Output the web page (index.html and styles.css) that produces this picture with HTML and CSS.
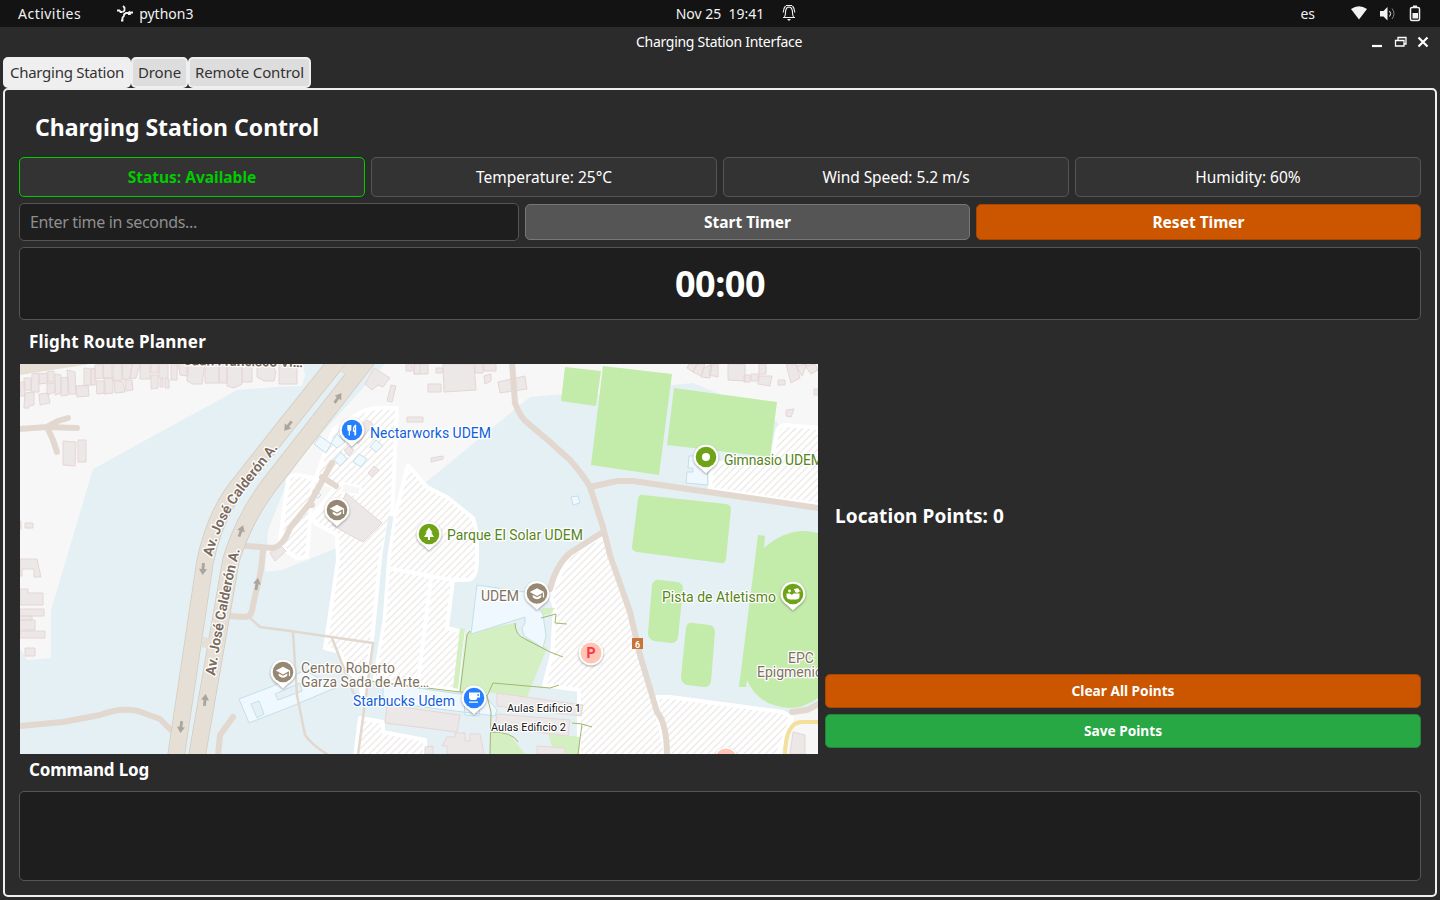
FILE: index.html
```html
<!DOCTYPE html>
<html lang="en">
<head>
<meta charset="utf-8">
<title>Charging Station Interface</title>
<link rel="stylesheet" href="styles.css">
</head>
<body>
<div class="topbar">
  <div class="top-left"><span class="t-act">Activities</span>
    <span class="app"><svg class="ic-app" width="18" height="18" viewBox="0 0 18 18"><path d="M1 6.500h2.500l1 1.500h2M7 8l1.500-1.500V3.500L7 2M5 16.500h1.500v-3L8 12V10.500l2-1.500h2.500l1.500-1.500M12 10h2l1-1.500h2"/></svg><span class="t-py">python3</span></span>
  </div>
  <div class="top-mid"><span class="t-date">Nov 25&nbsp; 19:41</span>
    <svg class="ic-bell" width="16" height="18" viewBox="0 0 16 18"><path d="M3.500 13C5 11 4.200 8 4.800 6 5.300 4 6.500 3 8 3s2.700 1 3.200 3c.6 2-.2 5 1.300 7M2 13.500h12M4.500 2Q2.500 4 2.200 8.500M11.500 2q2 2 2.300 6.500M5 1.500h6"/><path class="solid" d="M6 15h4l-2 2z"/></svg>
  </div>
  <div class="top-right"><span class="t-es">es</span>
    <svg width="76" height="18" viewBox="0 0 76 18"><path class="w" d="M1 4Q9-1.500 17 4L9 14.500z"/><path class="w" d="M30 6h3.500L37.500 2v13.500l-4-4H30z"/><path class="l" d="M39.500 6q2.500 2.500 0 5.500"/><path class="l dim" d="M42 3.500q4 5 0 10.500"/><rect class="l thicker" x="60.500" y="2.500" width="9" height="13" rx="1.500"/><path class="w" d="M63 .5h4v2h-4zM62.500 8h5.500v5.500h-5.500z"/></svg>
  </div>
</div>
<div class="titlebar"><span class="t-win">Charging Station Interface</span>
  <svg class="winbtns" width="60" height="16" viewBox="0 0 60 16"><path class="thick" d="M3 11h10"/><path class="l" d="M26.500 5.500h8.500v5.500h-8.500zM29 5.500v-3h8v6.500h-2"/><path class="thick" d="M49.500 2.500l9 9M58.500 2.500l-9 9"/></svg>
</div>
<div class="tabs"><div class="tab on"><span class="t-tab1">Charging Station</span></div><div class="tab tab-d"><span class="t-tab2">Drone</span></div><div class="tab tab-r"><span class="t-tab3">Remote Control</span></div></div>
<main class="panel">
  <h1>Charging Station Control</h1>
  <div class="stats">
    <div class="stat ok">Status: Available</div>
    <div class="stat">Temperature: 25°C</div>
    <div class="stat"><span class="t-s3">Wind Speed: 5.2 m/s</span></div>
    <div class="stat">Humidity: 60%</div>
  </div>
  <div class="controls">
    <div class="field"><span class="t-ph">Enter time in seconds...</span></div>
    <div class="btn grey">Start Timer</div>
    <div class="btn orange">Reset Timer</div>
  </div>
  <div class="clock"><span class="t-clock">00:00</span></div>
  <h2 class="h-route">Flight Route Planner</h2>
  <div class="route">
    <svg class="map" width="800" height="392" viewBox="19 363 800 392">
      <defs>
        <pattern id="hatch" width="7.200" height="7.200" patternUnits="userSpaceOnUse"><rect width="7.200" height="7.200" fill="#fff"/><path d="M-1 8.200L8.200-1M-1 1L1-1M6.200 8.200l2-2" stroke="#e8e3e0" stroke-width="1.100"/></pattern>
        <g id="pin"><path class="pinbg" d="M0-12.500a12.500 12.500 0 0 1 8.500 21.500Q4.500 12 0 16.500-4.500 12-8.500 9A12.500 12.500 0 0 1 0-12.500z"/></g>
        <g id="cap"><path d="M0-5.200L7.200-1.400 0 2.400-7.200-1.400z" fill="#fff"/><path d="M-4.300 1.500v2.300Q0 7.600 4.300 3.800V1.500L0 3.800zM5.900-1h1.200v5H5.900z" fill="#fff"/></g>
        <g id="arrow"><path d="M-1.400 6v-6h-2.600L0-6l4 6H1.400v6z" fill="#aaa59d"/></g>
      </defs>
      <rect x="20" y="364" width="798" height="390" fill="#e4f0f4"/>
      <g fill="#f7f7f7">
        <path d="M20 364H303l2 11-3 11-25 1-40 3L93 469 66 560 51 610v48l-24 2-7-12z"/>
        <path d="M385 364H818v66l-38-2-3-6-60-29-24-10-21 2-71 10-37-1-34 3-105 86-35 37-53 28-55 22-17 2 3-42 22-55 12-20z"/>
        <path d="M792 712l26-8v50h-41l10-20z"/>
      </g>
      <path d="M20 364h70L20 375z" fill="#e5dfd5"/>
      <g class="hatched">
        <path d="M353 417q12-9 27-9h17l-5 109-12 43-8 82-9 60-3-20-10-10-10-20-15-4 13-88-1-25-22-12q-5-8 6-17l14-19-20-7 18-50z"/>
        <path d="M288 480q3-6 10-5l15 3-3 40-3 39-10 1-12-8-5-10z"/>
        <path d="M408 465l19 22 20 10 26 21 4 14v31q-1 17-10 17h-14l-6 48 16 4-6 58-84-10 11-58 5-67 5-36z"/>
        <path d="M360 718l23 4v10l42 8v16h-70z"/>
        <path d="M603 535l10 25 17 52 10 43 17 57 10 44h-88v-66l-35-5 8-30 3-47-5-13 20-40z"/>
        <path d="M657 697h13l113 15 9 6-15 38H667l-8-34z"/>
        <path d="M777 432q1-7 10-7l33 3v77l-110-16 1-16 6-10 55-3z"/>
      </g>
      <path d="M343 483l18 4-2 8-18-2z" fill="#f7f7f7" stroke="#fff" stroke-width="2"/>
      <path d="M387 568l66 12M431 578l-13 104" stroke="#fff" stroke-width="4" fill="none"/>
      <path d="M391 516l-6 38-5 66-10 60" stroke="#e4f0f4" stroke-width="5" fill="none"/>
      <g class="green">
        <path d="M565 367l36 4-5 35-35-5zM603 366l69 8-13 101-68-10zM674 388l103 14-7 55-103-12z"/>
        <path d="M643 495l83 9q5 1 5 5l-5 50q-1 5-5 4l-84-11q-5-1-5-5l6-48q1-5 5-4z"/>
        <path d="M660 580l17 2q6 1 6 7l-5 48q-1 6-7 6l-17-2q-6-2-6-8l4-48q2-6 8-5zM693 623l16 2q6 1 6 7l-4 49q-1 6-7 6l-17-2q-6-2-6-8l5-49q1-6 7-5z"/>
        <path d="M758 535l7 1-1 12q20-18 43-17l11 2v165q-14 10-28 10-32-2-43-28l-1 7h-7z"/>
      </g>
      <g fill="#d4f0c3"><path d="M467 632l48-9 3 12 29 13-20 49-34-4-33-1zM460 628l5 1-7 60-5-1zM555 608l-5 6-14 3 7-9zM490 732l20 3 15 19h-35zM548 733l32 4-1 17h-25z"/></g>
      <g class="bld">
        <path d="M20 382h5v14h-5zM24 378h7v12h-7zM32 374l7-1v19h-8zM39 374l9-1v10l-9 1zM47 372l7-1v11h-7zM47 384l8-1v9l-8 3zM39 394l9-1 2 10-10 2zM25 393l9-1v13l-5 1v2h-5zM55 374l6 1v18l-6 2zM61 378l7-1v18l-7 1zM67 370l8 2 1 22h-7zM76 386l12-1 1 11-12 1zM84 368l7 1v16l-7 1zM91 369l4-1v17h-4zM95 365l8-1v14l-8 1zM96 381h9v12l-8 1zM104 378h9v15l-9 1zM103 364h9v14h-9zM113 364h9v16l-9 1zM114 380l9 2 2 10-10 1zM122 364h10l-2 14-7 2zM125 380h7l1 10-7 1zM132 364h8l-4 14-6 1zM140 364h10v15h-10zM151 364h7v9h-7zM151 375h7v13l-7 1zM159 364h9v14h-9zM160 379h3v8h-3zM165 379h4v9h-4zM171 364h6v16h-6zM178 364h10v12l-8-1zM187 364h18l-3 20h-9l-6-3zM205 364h14v19h-14zM219 364h8v19h-8zM227 364h15v20l-8 4-7-2zM242 364h10v18h-10zM257 364h15l4 8-2 9h-10l-7-4zM279 364h18v20h-18z"/>
        <path d="M63 441l13 1-1 24-12-1zM78 440h8v22h-8zM20 521h1v8h-1zM25 523h8v5h-8zM20 559h17l4 18h-7v-8h-12v7h-2zM20 589h8v4h15v12H20zM20 609h24v7H20zM20 616h12v4H20zM20 620h15v10H20zM20 631h25v7H20zM25 648h10v8H25z"/>
        <path d="M374 368l16 10-7 9-5-2-6 5-7-6zM391 385l5 1-4 16-5-1zM406 364h6v7h-6zM414 364h14v10h-14zM414 364h6v10h-6zM443 364h31l2 26-32 2zM428 384h13v8h-13zM436 368h7v5h-7zM475 364h8v9h-8zM484 364h12v7h-12zM484 376l7-2v7l-6 3zM498 382l27-6 2 13-27 4zM407 417h16v5h-16zM431 458l12-2v3l-12 3zM353 434l14-14 6 4-15 20zM344 450l5-4 5 4-5 6zM368 473l6-7 5 4-7 7zM346 493l36 30-19 19-15-8-16-9z"/>
        <path d="M689 364h8l-4 8-6-4zM697 364h8l-4 12-8-4zM704 368l8-4-2 14-9-1zM711 364h7v13l-9-2zM728 364h17v17l-17-1zM744 375h6v7h-6zM751 374h8v7h-8zM759 364h7v10h-7zM758 376h14l-2 10-12-2zM778 380h7v5h-7zM786 364h10l4 14-9 5zM796 366l11-2-5 12zM805 366l10-2 3 6-7 4zM786 410l8-1-3 8-5-1zM814 389h4v6h-4zM270 553l10-8 6 6-11 10z"/>
        <path d="M387 705l73 10-3 17-72-9zM447 737h8v-4h10v8h5v-7h10l4 20h-37v-8h-5zM425 747l8-1v8h-8zM497 693l86 12-2 11-84-10zM497 714l73 6-2 16-73-9zM537 746l28 2v6h-28zM793 732l12 3v19h-15z"/>
      </g>
      <g class="glass">
        <path d="M477 585l48 7 18 22 3 22-3 12-19-12-2-8 3-5v-6l-54 17zM239 699l34-13 32-16 30 18-40 17-46 18zM383 683l104 15 10 12-2 6-40-5-72-9zM464 702l16 2-1 12-14-1z"/>
        <path d="M320 436l11 8-5 9-12-9zM337 434l8 8-8 6-6-5zM341 452l6 7-7 7-6-6zM359 454l8 5-6 8-8-5zM376 440l7 6-7 6-6-5zM314 489l7 6-3 3-6-5zM689 456h17l2 29-22-2 1-11h6v-4h-5zM571 497l7-1 2 7-7 2z"/>
      </g>
      <path d="M251 704l8-3 5 13-7 4zM275 694l25-11 2 8-24 9z" fill="#e4f0f4" stroke="#c5dfe8"/>
      <g class="brown">
        <path d="M512 362l3 41q5 15 15 22l20 17 20 18q14 16 20 27l13 40 7 28 20 57 10 43 17 57q10 12 10 44M590 487l27-6h16l185 27M603 532l-33 21q-14 12-20 36"/>
        <path d="M20 429l27-2 30 1M47 427l6 13 4 12M47 427l11-6 10-3M20 726l43-4 37-7q20-8 38-4l22 8 12 12M233 717l-13 18-2 20"/>
        <path d="M247 546l26 2q10-2 17-20l20-25 22-40M322 477l14 9M263 550l-2 20-8 35q-1 12-8 12l-17-1M792 712l15-2 12-6M310 505h2"/>
        <path class="thin" d="M250 618l10 9 30 4 83 12-15 112M293 633l4 62 8 40q8 11 22 19M332 638l21 54 10 12"/>
      </g>
      <path d="M785 757q0-36 18-35h16" fill="none" stroke="#f4df9b" stroke-width="4"/>
      <g fill="none" stroke="#a4b86c"><path d="M470 631l-3 4-7 57 27 4M370 681l90 11M515 623q0 12 10 16l25 13 13 5M541 618l15-4-1 9 12 1M559 685l-9 3-57-5-6 13 4 16-1 42M490 732q23 0 28 10M572 723l10 1 10 3M582 724l-4 30"/></g>
      <g fill="none">
        <path class="edge" d="M343 354L287 424 243 480Q216 510 205 562L176 756"/>
        <path class="edge" d="M373 352L270 484Q244 518 231 560L197 756"/>
        <path class="road" d="M343 354L287 424 243 480Q216 510 205 562L176 756"/>
        <path class="road" d="M373 352L270 484Q244 518 231 560L197 756"/>
        <path d="M208 638l-2 10M352 364l-8 10" stroke="#e5dfd5" stroke-width="10"/>
      </g>
      <use href="#arrow" transform="translate(288 426) rotate(218)"/><use href="#arrow" transform="translate(338 398) rotate(35)"/><use href="#arrow" transform="translate(241 531) rotate(20)"/><use href="#arrow" transform="translate(203 569) rotate(184)"/><use href="#arrow" transform="translate(257 584) rotate(10)"/><use href="#arrow" transform="translate(205 700) rotate(6)"/><use href="#arrow" transform="translate(181 727) rotate(186)"/>
      <path id="p1" d="M212 557Q221 521 245 490L283 442" fill="none"/>
      <path id="p2" d="M215 676Q225 610 241 545" fill="none"/>
      <text class="street"><textPath href="#p1" textLength="129">Av. José Calderón A.</textPath></text>
      <text class="street"><textPath href="#p2" textLength="129">Av. José Calderón A.</textPath></text>
      <text class="street" x="184" y="365" textLength="119" transform="rotate(1 184 365)">Juan Francisco Vi…</text>
      <g class="lbl">
        <text class="blue" x="370" y="438" textLength="121">Nectarworks UDEM</text>
        <text class="gr" x="447" y="540" textLength="136">Parque El Solar UDEM</text>
        <text class="gr" x="724" y="465" textLength="99">Gimnasio UDEM</text>
        <text class="gr" x="662" y="602" textLength="114">Pista de Atletismo</text>
        <text x="481" y="601" textLength="38">UDEM</text>
        <text x="301" y="673" textLength="94">Centro Roberto</text>
        <text x="301" y="687" textLength="128">Garza Sada de Arte…</text>
        <text class="blue" x="353" y="706" textLength="102">Starbucks Udem</text>
        <text x="788" y="663">EPC</text>
        <text x="757" y="677">Epigmenio</text>
        <text class="sm" x="507" y="712" textLength="74">Aulas Edificio 1</text>
        <text class="sm" x="491" y="731" textLength="75">Aulas Edificio 2</text>
      </g>
      <g transform="translate(352 430)"><use href="#pin"/><circle r="10.300" fill="#2580ff"/><path d="M-4-5v4q0 2 1.300 2v4.500M-1.300-5v4q0 2-1.300 2M-2.700-5v5M4-5Q1.500-4 1.500 0v1H3v4.500M3.500-5V5" stroke="#fff" stroke-width="1.300" fill="none"/></g>
      <g transform="translate(337 510)"><use href="#pin"/><circle r="10.300" fill="#968872"/><use href="#cap"/></g>
      <g transform="translate(537 593.500)"><use href="#pin"/><circle r="10.300" fill="#968872"/><use href="#cap"/></g>
      <g transform="translate(283 672)"><use href="#pin"/><circle r="10.300" fill="#968872"/><use href="#cap"/></g>
      <g transform="translate(429 534)"><use href="#pin"/><circle r="10.300" fill="#6fa317"/><path d="M0-6.500l3.500 5H2.200L5 3H1v3h-2V3h-4l2.800-4.500h-1.300z" fill="#fff"/></g>
      <g transform="translate(706 457)"><use href="#pin"/><circle r="10.300" fill="#6fa317"/><circle r="4" fill="#fff"/></g>
      <g transform="translate(793 594)"><use href="#pin"/><circle r="10.300" fill="#6fa317"/><path d="M-6.500-.5h3L-1 1 .5-.5h6V3Q6 5.500 3 5.500h-5.500Q-6 5.500-6.500 2.500z" fill="#fff"/><circle cx="4" cy="-3.500" r="2.300" fill="#fff"/><circle cx="-3.500" cy="-3" r="1.400" fill="#fff"/><path d="M4-3.500h3.500v1H4zM1-5h2v1H1z" fill="#fff"/></g>
      <g transform="translate(474 698)"><use href="#pin"/><circle r="10.300" fill="#2580ff"/><path d="M-5-5.500H6V-.5H3.500Q3 2 1 2h-3.500Q-5 2-5-1zM-5 3.500H4v1.300h-9z" fill="#fff"/><path d="M3.500-4h1.300v2H3.500z" fill="#2580ff"/></g>
      <g transform="translate(591 653)"><circle class="pinbg" r="12.300"/><circle r="10.500" fill="#ffc5b5"/><text class="park" x="0" y="5">P</text></g>
      <g transform="translate(726 759)"><circle class="pinbg" r="12"/><circle r="10.500" fill="#ffc5b5"/></g>
      <rect x="632" y="638" width="11" height="11" fill="#c87436"/><text class="six" x="637.500" y="647.500">6</text>
      <path d="M19.500 363.500h799v391h-799z" fill="none" stroke="#2b2b2b"/>
    </svg>
    <div class="side">
      <div class="points">Location Points: 0</div>
      <div class="btn sm-btn orange">Clear All Points</div>
      <div class="btn sm-btn green-btn">Save Points</div>
    </div>
  </div>
  <h2 class="h-log">Command Log</h2>
  <div class="log"></div>
</main>
</body>
</html>
```
FILE: styles.css
```css
* { box-sizing: border-box; }
body { margin: 0; width: 1440px; height: 900px; overflow: hidden; background: #2b2b2b; color: #fff; font-family: "Noto Sans", sans-serif; display: flex; flex-direction: column; }
.topbar { height: 27px; flex: none; background: #131313; display: grid; grid-template-columns: 1fr auto 1fr; align-items: center; font-size: 14px; line-height: 27px; color: #f2f2f2; }
.top-left, .top-mid, .top-right, .app { display: flex; align-items: center; }
.top-left { padding-left: 18px; gap: 35px; }
.app { gap: 5px; }
.top-mid { gap: 17px; padding-left: 33px; line-height: 25px; }
.top-right { justify-content: flex-end; padding-right: 14px; gap: 35px; }
.topbar span { white-space: nowrap; }
.topbar svg, .winbtns { fill: none; stroke: #f2f2f2; }
.topbar .w, .topbar .solid { fill: #f2f2f2; stroke: none; }
.dim { opacity: .5; }
.thicker { stroke-width: 1.5; }
.ic-app { stroke-width: 1.8; margin-top: -2px; }
.ic-bell { stroke-width: 1.1; margin-top: -2px; }
.t-act { letter-spacing: .48px; }
.t-win { grid-column: 2; letter-spacing: -.29px; margin-right: 2px; }
.t-tab1 { letter-spacing: -.28px; }
.t-tab2, .t-tab3 { letter-spacing: -.13px; }
.t-s3 { letter-spacing: -.07px; }
.t-ph { letter-spacing: -.33px; }
.titlebar { height: 30px; flex: none; display: grid; grid-template-columns: 1fr auto 1fr; align-items: center; font-size: 14px; line-height: 30px; }
.winbtns { justify-self: end; margin-top: 1px; margin-right: 11px; stroke: #fff; stroke-width: 1.3; }
.winbtns .thick { stroke-width: 2.2; }
.tabs { height: 31px; flex: none; display: flex; padding-left: 3px; }
.tab { height: 31px; background: #ddd; border: 2px solid #efefef; border-radius: 5px; color: #333; font-size: 15px; line-height: 27px; text-align: center; white-space: nowrap; width: 128px; }
.tab.on { background: #efefef; }
.tab-d { width: 57px; }
.tab-r { width: 123px; }
.panel { margin: 0 3px; height: 809px; flex: none; border: 2px solid #efefef; border-radius: 5px; padding: 14px 14px 0; display: flex; flex-direction: column; }
h1, h2 { margin: 0; font-weight: 700; }
h1 { height: 53px; padding: 0 16px; font-size: 23px; line-height: 47px; }
.stats { display: grid; grid-template-columns: repeat(4, 1fr); gap: 6px; height: 40px; }
.stat { border: 1px solid #555; border-radius: 5px; background: #333; text-align: center; font-size: 15.5px; line-height: 38px; }
.stat.ok { border-color: #0c0; color: #0c0; font-weight: 700; }
.controls { display: grid; grid-template-columns: 500px 1fr 1fr; gap: 6px; align-items: center; height: 38px; margin-top: 6px; }
.field { height: 38px; border: 1px solid #555; border-radius: 5px; background: #1e1e1e; color: #8e8e8e; padding: 0 10px; font-size: 16px; line-height: 36px; }
.btn { height: 36px; border-radius: 5px; border: 1px solid; text-align: center; font-size: 15.5px; font-weight: 700; line-height: 34px; }
.grey { background: #555; border-color: #777; }
.orange { background: #c50; border-color: #a84600; }
.green-btn { background: #28a745; border-color: #208738; }
.clock { margin-top: 6px; height: 73px; border: 1px solid #555; border-radius: 5px; background: #1e1e1e; text-align: center; font-size: 36px; font-weight: 700; line-height: 71px; }
.t-clock { letter-spacing: -.5px; }
h2 { padding-left: 10px; font-size: 17px; }
.h-route { height: 43px; line-height: 44px; letter-spacing: .17px; }
.route { display: grid; grid-template-columns: 800px 1fr; gap: 6px; height: 392px; }
.map { display: block; overflow: hidden; }
.side { display: flex; flex-direction: column; gap: 6px; padding-bottom: 7px; }
.points { flex: 1; display: flex; align-items: center; padding-left: 10px; font-size: 19px; font-weight: 700; letter-spacing: .09px; }
.sm-btn { height: 34px; font-size: 13.7px; line-height: 31px; }
.h-log { height: 36px; line-height: 30px; letter-spacing: -.18px; }
.log { height: 90px; border: 1px solid #555; border-radius: 5px; background: #1e1e1e; }
.map text { font-family: Roboto, sans-serif; }
.lbl text { font-size: 14px; fill: #7f725f; stroke: #fff; stroke-width: 2.5px; stroke-linejoin: round; paint-order: stroke; }
.lbl .blue { fill: #1060dc; }
.lbl .gr { fill: #568519; }
.lbl .sm { font-size: 11px; fill: #111; }
.street { font-size: 14px; font-weight: 700; fill: #7b6c5e; stroke: #fff; stroke-width: 2.5px; stroke-linejoin: round; paint-order: stroke; }
.park { font-size: 14px; font-weight: 700; fill: #f83449; text-anchor: middle; }
.six { font-size: 9px; font-weight: 700; fill: #fff; text-anchor: middle; }
.pinbg { fill: #fff; filter: drop-shadow(0 1px 1px rgba(0, 0, 0, .35)); }
.hatched { fill: url(#hatch); stroke: #fff; stroke-width: 4; stroke-linejoin: round; }
.green { fill: #c3ebaa; }
.bld { fill: #ece8e8; stroke: #e6d6d5; }
.glass { fill: #eff8fe; stroke: #c5dfe8; }
.brown { fill: none; stroke: #e2d8cf; stroke-width: 6; stroke-linecap: round; stroke-linejoin: round; }
.brown .thin { stroke-width: 2.5; }
.edge { stroke: #d3cbc0; stroke-width: 17.500; }
.road { stroke: #e5dfd5; stroke-width: 16; }
.top-right svg { margin-top: 1px; }
```
